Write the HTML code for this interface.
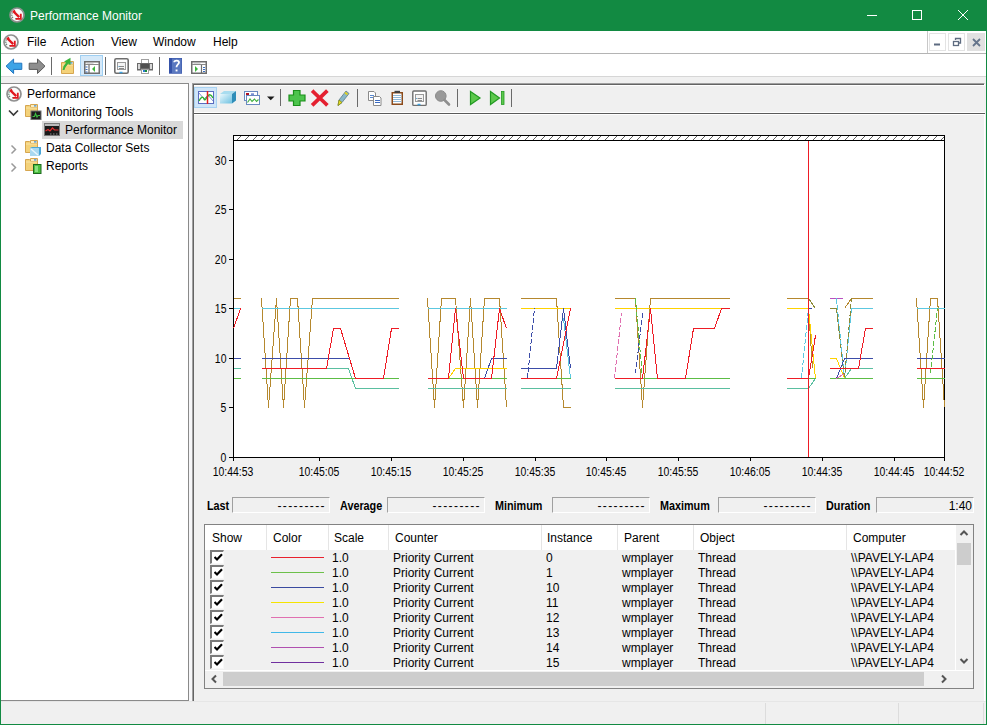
<!DOCTYPE html>
<html><head><meta charset="utf-8">
<style>
*{margin:0;padding:0;box-sizing:border-box}
html,body{width:987px;height:725px;overflow:hidden;background:#f0f0f0;font-family:"Liberation Sans",sans-serif;font-size:12px;color:#000}
.a{position:absolute}
.t{position:absolute;white-space:nowrap;line-height:14px}
.lab{transform:scaleX(0.87)}
#frame{left:0;top:0;width:987px;height:725px;border:1px solid #128a42;border-top:0}
#title{left:0;top:0;width:987px;height:31px;background:#128a42}
#menubar{left:1px;top:31px;width:985px;height:23px;background:#fff;border-bottom:1px solid #b4b4b4}
#toolbar{left:1px;top:54px;width:985px;height:23px;background:#fff;border-bottom:1px solid #d6d6d6}
#tree{left:1px;top:83px;width:188px;height:618px;background:#fff;border:1px solid #8a8a8a;border-left:0}
#rpane{left:192px;top:83px;width:793px;height:619px;border-top:1px solid #a0a0a0;border-left:1px solid #a0a0a0;border-bottom:1px solid #fff;border-right:1px solid #fff;box-shadow:inset 1px 1px 0 #646464}
#gap{left:189px;top:83px;width:3px;height:618px;background:#f6f6f8}
#rtool{left:194px;top:85px;width:791px;height:30px;background:#f0f0f0;border-top:1px solid #fff;border-bottom:1px solid #fff;box-shadow:inset 0 -1px 0 #5a5a5a, inset 0 -2px 0 #fff}
.sep{position:absolute;width:1px;background:#7a7a7a}
.sbox{position:absolute;top:497px;height:16px;border-top:1px solid #a0a0a0;border-left:1px solid #a0a0a0;border-bottom:1px solid #fff;border-right:1px solid #fff;background:#f0f0f0}
.slab{position:absolute;top:499px;font-weight:bold;font-size:12px;line-height:14px;white-space:nowrap;transform:scaleX(0.9);transform-origin:0 0}
.sval{position:absolute;top:499px;font-size:12px;line-height:14px;white-space:nowrap;text-align:right;letter-spacing:1.4px}
#table{left:204px;top:524px;width:770px;height:165px;border:1px solid #828282;background:#f0f0f0}
#thead{left:205px;top:525px;width:750px;height:25px;background:#fff}
.colsep{position:absolute;top:525px;width:1px;height:25px;background:#e5e5e5}
.cb{position:absolute;left:210px;width:14px;height:14px;border-top:2px solid #7a7a7a;border-left:2px solid #7a7a7a;border-bottom:1px solid #f8f8f8;border-right:1px solid #f8f8f8;background:#fff}
#status{left:1px;top:701px;width:985px;height:23px;background:#f0f0f0;border-top:1px solid #e6e6e6}
</style></head><body>
<div id="frame" class="a"></div>
<div id="title" class="a"></div>
<div class="t" style="left:30px;top:9px;color:#fff">Performance Monitor</div>
<div id="menubar" class="a"></div>
<div class="t" style="left:27px;top:35px">File</div>
<div class="t" style="left:61px;top:35px">Action</div>
<div class="t" style="left:111px;top:35px">View</div>
<div class="t" style="left:153px;top:35px">Window</div>
<div class="t" style="left:213px;top:35px">Help</div>
<div id="toolbar" class="a"></div>
<div id="tree" class="a"></div>
<div id="gap" class="a"></div>
<div id="rpane" class="a"></div>
<div id="rtool" class="a"></div>
<!--CHART-->
<svg class="a" style="left:0;top:0" width="987" height="725" shape-rendering="crispEdges">
<defs><pattern id="hat" x="5" y="136" width="8" height="4" patternUnits="userSpaceOnUse"><path d="M0 4 L4 0" stroke="#606060" stroke-width="1" fill="none"/></pattern></defs>
<rect x="234" y="141" width="710" height="316" fill="#fff"/>
<rect x="234" y="136" width="710" height="4" fill="#fff"/>
<rect x="234" y="136" width="710" height="4" fill="url(#hat)"/>
<g stroke="#000" stroke-width="1" fill="none">
<path d="M233.5 135 V461 M233 135.5 H945 M233 140.5 H945 M944.5 135 V461 M229 457.5 H945"/>
<path d="M229 160.5 H233"/>
<path d="M229 209.5 H233"/>
<path d="M229 259.5 H233"/>
<path d="M229 308.5 H233"/>
<path d="M229 358.5 H233"/>
<path d="M229 407.5 H233"/>
<path d="M229 457.5 H233"/>
<path d="M233.5 457 V461"/>
<path d="M319.5 457 V461"/>
<path d="M391.5 457 V461"/>
<path d="M463.5 457 V461"/>
<path d="M535.5 457 V461"/>
<path d="M606.5 457 V461"/>
<path d="M678.5 457 V461"/>
<path d="M750.5 457 V461"/>
<path d="M822.5 457 V461"/>
<path d="M894.5 457 V461"/>
<path d="M944.5 457 V461"/>
</g>
<g fill="none" stroke-width="1">
<path d="M233.5 298.5 L240.5 298.5" stroke="#b5882e"/>
<path d="M233.5 368.5 L240.5 368.5" stroke="#5abfa0"/>
<path d="M233.5 378.5 L240.5 378.5" stroke="#5cbd45"/>
<path d="M233.5 358.5 L240.5 358.5" stroke="#3b4ca8"/>
<path d="M233.5 308.5 L240.5 308.5" stroke="#5cc8e0"/>
<path d="M233.5 328.5 L240.5 308.5" stroke="#ee1c25"/>
<path d="M261.5 298.5 L268.5 407.5 L276.5 298.5 L283.5 407.5 L290.5 298.5 L297.5 298.5 L304.5 407.5 L312.5 298.5 L398.5 298.5" stroke="#b5882e"/>
<path d="M261.5 368.5 L348.5 368.5 L355.5 388.5 L398.5 388.5" stroke="#5abfa0"/>
<path d="M261.5 378.5 L398.5 378.5" stroke="#5cbd45"/>
<path d="M261.5 358.5 L348.5 358.5" stroke="#3b4ca8"/>
<path d="M261.5 308.5 L398.5 308.5" stroke="#5cc8e0"/>
<path d="M261.5 368.5 L326.5 368.5 L333.5 328.5 L340.5 328.5 L355.5 378.5 L383.5 378.5 L391.5 328.5 L398.5 328.5" stroke="#ee1c25"/>
<path d="M427.5 298.5 L434.5 407.5 L441.5 298.5 L455.5 298.5 L463.5 407.5 L470.5 298.5 L477.5 407.5 L484.5 298.5 L499.5 298.5 L506.5 407.5" stroke="#b5882e"/>
<path d="M427.5 378.5 L484.5 378.5 L491.5 358.5 L506.5 358.5" stroke="#3b4ca8"/>
<path d="M427.5 378.5 L448.5 378.5 L455.5 368.5 L506.5 368.5" stroke="#ffd200"/>
<path d="M427.5 388.5 L506.5 388.5" stroke="#5abfa0"/>
<path d="M427.5 378.5 L506.5 378.5" stroke="#5cbd45"/>
<path d="M427.5 308.5 L506.5 308.5" stroke="#5cc8e0"/>
<path d="M427.5 378.5 L448.5 378.5 L455.5 308.5 L463.5 378.5 L491.5 378.5 L499.5 308.5 L506.5 328.5" stroke="#ee1c25"/>
<path d="M520.5 298.5 L556.5 298.5 L563.5 407.5 L570.5 407.5" stroke="#b5882e"/>
<path d="M520.5 388.5 L570.5 388.5" stroke="#5abfa0"/>
<path d="M520.5 378.5 L570.5 378.5" stroke="#5cbd45"/>
<path d="M520.5 308.5 L570.5 308.5" stroke="#ffd200"/>
<path d="M563.5 318.5 L570.5 378.5" stroke="#5cc8e0"/>
<path d="M520.5 368.5 L556.5 368.5 L563.5 308.5 L570.5 368.5" stroke="#3b4ca8"/>
<path d="M520.5 378.5 L556.5 378.5 L570.5 308.5" stroke="#ee1c25"/>
<path d="M527.5 378.5 L534.5 308.5" stroke="#3b4ca8" stroke-dasharray="5 2"/>
<path d="M614.5 298.5 L635.5 298.5 L642.5 407.5 L650.5 298.5 L729.5 298.5" stroke="#b5882e"/>
<path d="M614.5 388.5 L729.5 388.5" stroke="#5abfa0"/>
<path d="M614.5 378.5 L729.5 378.5" stroke="#5cbd45"/>
<path d="M614.5 308.5 L729.5 308.5" stroke="#ffd200"/>
<path d="M614.5 378.5 L621.5 313.5" stroke="#e070b0" stroke-dasharray="5 2"/>
<path d="M635.5 373.5 L642.5 313.5" stroke="#3b4ca8" stroke-dasharray="5 2"/>
<path d="M635.5 298.5 L642.5 378.5" stroke="#5cbd45" stroke-dasharray="5 2"/>
<path d="M614.5 378.5 L642.5 378.5 L650.5 308.5 L657.5 378.5 L685.5 378.5 L693.5 328.5 L714.5 328.5 L721.5 308.5 L729.5 308.5" stroke="#ee1c25"/>
<path d="M786.5 298.5 L808.5 298.5" stroke="#b5882e"/>
<path d="M808.5 298.5 L815.5 308.5" stroke="#8c8a36"/>
<path d="M786.5 388.5 L808.5 388.5 L815.5 378.5" stroke="#5abfa0"/>
<path d="M808.5 378.5 L815.5 378.5" stroke="#5cbd45"/>
<path d="M801.5 378.5 L808.5 308.5 L815.5 378.5" stroke="#5cc8e0" stroke-dasharray="5 2"/>
<path d="M808.5 308.5 L811.5 308.5" stroke="#3b4ca8"/>
<path d="M808.5 308.5 L812.5 368.5" stroke="#b5882e"/>
<path d="M786.5 308.5 L808.5 308.5 L815.5 378.5" stroke="#ffd200"/>
<path d="M786.5 378.5 L808.5 378.5 L815.5 335.5" stroke="#ee1c25"/>
<path d="M829.5 298.5 L842.5 298.5" stroke="#b850c0"/>
<path d="M829.5 308.5 L836.5 308.5 L844.5 378.5" stroke="#8c8a36"/>
<path d="M844.5 308.5 L851.5 298.5 L872.5 298.5" stroke="#b5882e"/>
<path d="M844.5 378.5 L851.5 308.5" stroke="#b5882e"/>
<path d="M844.5 378.5 L851.5 308.5 L872.5 308.5" stroke="#5cc8e0"/>
<path d="M836.5 298.5 L844.5 378.5" stroke="#5cc8e0" stroke-dasharray="5 2"/>
<path d="M844.5 378.5 L851.5 298.5" stroke="#8c8a36" stroke-dasharray="5 2"/>
<path d="M829.5 358.5 L836.5 358.5 L844.5 378.5" stroke="#ffd200"/>
<path d="M844.5 378.5 L851.5 368.5 L872.5 368.5" stroke="#5abfa0"/>
<path d="M829.5 378.5 L872.5 378.5" stroke="#5cbd45"/>
<path d="M836.5 378.5 L844.5 358.5 L872.5 358.5" stroke="#3b4ca8"/>
<path d="M836.5 378.5 L844.5 373.5" stroke="#e070b0"/>
<path d="M829.5 368.5 L858.5 368.5 L865.5 328.5 L872.5 328.5" stroke="#ee1c25"/>
<path d="M916.5 298.5 L923.5 407.5 L930.5 298.5 L937.5 298.5 L944.5 407.5" stroke="#b5882e"/>
<path d="M916.5 378.5 L944.5 378.5" stroke="#5cbd45"/>
<path d="M916.5 358.5 L944.5 358.5" stroke="#3b4ca8"/>
<path d="M916.5 308.5 L944.5 308.5" stroke="#5cc8e0"/>
<path d="M916.5 368.5 L944.5 368.5" stroke="#ee1c25"/>
<path d="M930.5 373.5 L937.5 308.5" stroke="#5cbd45" stroke-dasharray="5 2"/>
</g>
<path d="M808.5 141 V457" stroke="#ee1c25" stroke-width="1"/>
</svg>
<div class="t lab" style="right:760px;top:154px">30</div>
<div class="t lab" style="right:760px;top:203px">25</div>
<div class="t lab" style="right:760px;top:253px">20</div>
<div class="t lab" style="right:760px;top:302px">15</div>
<div class="t lab" style="right:760px;top:352px">10</div>
<div class="t lab" style="right:760px;top:401px">5</div>
<div class="t lab" style="right:760px;top:451px">0</div>
<div class="t lab" style="left:203px;width:60px;text-align:center;top:465px">10:44:53</div>
<div class="t lab" style="left:289px;width:60px;text-align:center;top:465px">10:45:05</div>
<div class="t lab" style="left:361px;width:60px;text-align:center;top:465px">10:45:15</div>
<div class="t lab" style="left:433px;width:60px;text-align:center;top:465px">10:45:25</div>
<div class="t lab" style="left:505px;width:60px;text-align:center;top:465px">10:45:35</div>
<div class="t lab" style="left:576px;width:60px;text-align:center;top:465px">10:45:45</div>
<div class="t lab" style="left:648px;width:60px;text-align:center;top:465px">10:45:55</div>
<div class="t lab" style="left:720px;width:60px;text-align:center;top:465px">10:46:05</div>
<div class="t lab" style="left:792px;width:60px;text-align:center;top:465px">10:44:35</div>
<div class="t lab" style="left:864px;width:60px;text-align:center;top:465px">10:44:45</div>
<div class="t lab" style="left:914px;width:60px;text-align:center;top:465px">10:44:52</div>
<!--/CHART-->

<div class="a" style="left:42px;top:121px;width:141px;height:18px;background:#d9d9d9"></div>
<div class="t" style="left:27px;top:87px">Performance</div>
<div class="t" style="left:46px;top:105px">Monitoring Tools</div>
<div class="t" style="left:65px;top:123px">Performance Monitor</div>
<div class="t" style="left:46px;top:141px">Data Collector Sets</div>
<div class="t" style="left:46px;top:159px">Reports</div>

<div class="slab" style="left:207px">Last</div>
<div class="sbox" style="left:232px;width:98px"></div>
<div class="sval" style="left:232px;width:94px">---------</div>
<div class="slab" style="left:340px">Average</div>
<div class="sbox" style="left:387px;width:98px"></div>
<div class="sval" style="left:387px;width:94px">---------</div>
<div class="slab" style="left:495px">Minimum</div>
<div class="sbox" style="left:552px;width:98px"></div>
<div class="sval" style="left:552px;width:94px">---------</div>
<div class="slab" style="left:660px">Maximum</div>
<div class="sbox" style="left:718px;width:98px"></div>
<div class="sval" style="left:718px;width:94px">---------</div>
<div class="slab" style="left:826px">Duration</div>
<div class="sbox" style="left:876px;width:98px"></div>
<div class="sval" style="left:876px;width:96px;letter-spacing:0">1:40</div>
<div id="table" class="a"></div>
<div id="thead" class="a"></div>
<div class="colsep" style="left:266px"></div>
<div class="colsep" style="left:328px"></div>
<div class="colsep" style="left:388px"></div>
<div class="colsep" style="left:541px"></div>
<div class="colsep" style="left:617px"></div>
<div class="colsep" style="left:693px"></div>
<div class="colsep" style="left:846px"></div>
<div class="t" style="left:212px;top:531px">Show</div>
<div class="t" style="left:273px;top:531px">Color</div>
<div class="t" style="left:334px;top:531px">Scale</div>
<div class="t" style="left:395px;top:531px">Counter</div>
<div class="t" style="left:547px;top:531px">Instance</div>
<div class="t" style="left:624px;top:531px">Parent</div>
<div class="t" style="left:700px;top:531px">Object</div>
<div class="t" style="left:853px;top:531px">Computer</div>
<div class="cb" style="top:550px"><svg class="a" style="left:2px;top:1px" width="9" height="9" viewBox="0 0 9 9"><path d="M0.5 4 L3 6.5 L8 1.2" stroke="#000" stroke-width="2.2" fill="none"/></svg></div>
<div class="a" style="left:271px;top:557px;width:53px;height:1px;background:#e8202e"></div>
<div class="t" style="left:332px;top:551px">1.0</div>
<div class="t" style="left:393px;top:551px">Priority Current</div>
<div class="t" style="left:546px;top:551px">0</div>
<div class="t" style="left:622px;top:551px">wmplayer</div>
<div class="t" style="left:698px;top:551px">Thread</div>
<div class="t" style="left:851px;top:551px">\\PAVELY-LAP4</div>
<div class="cb" style="top:565px"><svg class="a" style="left:2px;top:1px" width="9" height="9" viewBox="0 0 9 9"><path d="M0.5 4 L3 6.5 L8 1.2" stroke="#000" stroke-width="2.2" fill="none"/></svg></div>
<div class="a" style="left:271px;top:572px;width:53px;height:1px;background:#6cc04a"></div>
<div class="t" style="left:332px;top:566px">1.0</div>
<div class="t" style="left:393px;top:566px">Priority Current</div>
<div class="t" style="left:546px;top:566px">1</div>
<div class="t" style="left:622px;top:566px">wmplayer</div>
<div class="t" style="left:698px;top:566px">Thread</div>
<div class="t" style="left:851px;top:566px">\\PAVELY-LAP4</div>
<div class="cb" style="top:580px"><svg class="a" style="left:2px;top:1px" width="9" height="9" viewBox="0 0 9 9"><path d="M0.5 4 L3 6.5 L8 1.2" stroke="#000" stroke-width="2.2" fill="none"/></svg></div>
<div class="a" style="left:271px;top:587px;width:53px;height:1px;background:#3a4aa0"></div>
<div class="t" style="left:332px;top:581px">1.0</div>
<div class="t" style="left:393px;top:581px">Priority Current</div>
<div class="t" style="left:546px;top:581px">10</div>
<div class="t" style="left:622px;top:581px">wmplayer</div>
<div class="t" style="left:698px;top:581px">Thread</div>
<div class="t" style="left:851px;top:581px">\\PAVELY-LAP4</div>
<div class="cb" style="top:595px"><svg class="a" style="left:2px;top:1px" width="9" height="9" viewBox="0 0 9 9"><path d="M0.5 4 L3 6.5 L8 1.2" stroke="#000" stroke-width="2.2" fill="none"/></svg></div>
<div class="a" style="left:271px;top:602px;width:53px;height:1px;background:#f5e400"></div>
<div class="t" style="left:332px;top:596px">1.0</div>
<div class="t" style="left:393px;top:596px">Priority Current</div>
<div class="t" style="left:546px;top:596px">11</div>
<div class="t" style="left:622px;top:596px">wmplayer</div>
<div class="t" style="left:698px;top:596px">Thread</div>
<div class="t" style="left:851px;top:596px">\\PAVELY-LAP4</div>
<div class="cb" style="top:610px"><svg class="a" style="left:2px;top:1px" width="9" height="9" viewBox="0 0 9 9"><path d="M0.5 4 L3 6.5 L8 1.2" stroke="#000" stroke-width="2.2" fill="none"/></svg></div>
<div class="a" style="left:271px;top:617px;width:53px;height:1px;background:#e070b0"></div>
<div class="t" style="left:332px;top:611px">1.0</div>
<div class="t" style="left:393px;top:611px">Priority Current</div>
<div class="t" style="left:546px;top:611px">12</div>
<div class="t" style="left:622px;top:611px">wmplayer</div>
<div class="t" style="left:698px;top:611px">Thread</div>
<div class="t" style="left:851px;top:611px">\\PAVELY-LAP4</div>
<div class="cb" style="top:625px"><svg class="a" style="left:2px;top:1px" width="9" height="9" viewBox="0 0 9 9"><path d="M0.5 4 L3 6.5 L8 1.2" stroke="#000" stroke-width="2.2" fill="none"/></svg></div>
<div class="a" style="left:271px;top:632px;width:53px;height:1px;background:#40b8e8"></div>
<div class="t" style="left:332px;top:626px">1.0</div>
<div class="t" style="left:393px;top:626px">Priority Current</div>
<div class="t" style="left:546px;top:626px">13</div>
<div class="t" style="left:622px;top:626px">wmplayer</div>
<div class="t" style="left:698px;top:626px">Thread</div>
<div class="t" style="left:851px;top:626px">\\PAVELY-LAP4</div>
<div class="cb" style="top:640px"><svg class="a" style="left:2px;top:1px" width="9" height="9" viewBox="0 0 9 9"><path d="M0.5 4 L3 6.5 L8 1.2" stroke="#000" stroke-width="2.2" fill="none"/></svg></div>
<div class="a" style="left:271px;top:647px;width:53px;height:1px;background:#b050b0"></div>
<div class="t" style="left:332px;top:641px">1.0</div>
<div class="t" style="left:393px;top:641px">Priority Current</div>
<div class="t" style="left:546px;top:641px">14</div>
<div class="t" style="left:622px;top:641px">wmplayer</div>
<div class="t" style="left:698px;top:641px">Thread</div>
<div class="t" style="left:851px;top:641px">\\PAVELY-LAP4</div>
<div class="cb" style="top:655px"><svg class="a" style="left:2px;top:1px" width="9" height="9" viewBox="0 0 9 9"><path d="M0.5 4 L3 6.5 L8 1.2" stroke="#000" stroke-width="2.2" fill="none"/></svg></div>
<div class="a" style="left:271px;top:662px;width:53px;height:1px;background:#7030a0"></div>
<div class="t" style="left:332px;top:656px">1.0</div>
<div class="t" style="left:393px;top:656px">Priority Current</div>
<div class="t" style="left:546px;top:656px">15</div>
<div class="t" style="left:622px;top:656px">wmplayer</div>
<div class="t" style="left:698px;top:656px">Thread</div>
<div class="t" style="left:851px;top:656px">\\PAVELY-LAP4</div>
<div class="a" style="left:955px;top:525px;width:18px;height:145px;background:#f0f0f0;border-left:1px solid #fff"></div>
<div class="a" style="left:957px;top:543px;width:14px;height:22px;background:#cdcdcd"></div>
<div class="a" style="left:205px;top:670px;width:768px;height:18px;background:#f0f0f0;border-top:1px solid #fff"></div>
<div class="a" style="left:223px;top:672px;width:701px;height:14px;background:#cdcdcd"></div>
<div id="status" class="a"></div>
<div class="a" style="left:765px;top:703px;width:1px;height:21px;background:#dcdcdc"></div>
<div class="a" style="left:898px;top:703px;width:1px;height:21px;background:#dcdcdc"></div>
<div class="a" style="left:983px;top:703px;width:1px;height:21px;background:#dcdcdc"></div>

<!--ICONS-->
<svg class="a" style="left:0;top:0" width="987" height="725">
<defs>
<g id="gauge">
 <circle cx="8" cy="8" r="7" fill="#fafafa" stroke="#909090" stroke-width="1.7"/>
 <path d="M3.4 5.5 A5 5 0 0 0 4.6 11.6" stroke="#5a7a6a" stroke-width="1.2" fill="none" stroke-dasharray="1.2 1"/>
 <path d="M6 11.8 h1.5" stroke="#5a7a6a" stroke-width="1"/>
 <path d="M4 4 L10.2 10.2" stroke="#e0161e" stroke-width="2.4"/>
 <path d="M11.8 6.8 V11.8 H6.8" stroke="#e0161e" stroke-width="1.8" fill="none"/>
 <path d="M5 3.2 L6.2 4.8" stroke="#e0161e" stroke-width="1.2"/>
</g>
<g id="folder">
 <path d="M0.5 1.5 H4.5 L5.5 2.5 H12.5 V12.5 H0.5 Z" fill="#f4d27a" stroke="#d6a650" stroke-width="1"/>
 <path d="M5.5 0.5 H12.5 V3.5 H5.5 Z" fill="#fbeec0" stroke="#d6a650" stroke-width="1"/>
 <rect x="9" y="1.3" width="2.5" height="1.2" fill="#3a8ad8"/>
 <path d="M1 4 H12" stroke="#f8e4a8" stroke-width="1"/>
</g>
<g id="winicon">
 <rect x="0.75" y="0.75" width="14.5" height="11.5" fill="#fff" stroke="#6e6e6e" stroke-width="1.5"/>
 <path d="M1 3.5 H15" stroke="#8a8a8a" stroke-width="1"/>
 <path d="M2.5 2 H9.5" stroke="#b0b0b0" stroke-width="1"/>
</g>
</defs>
<!-- title icon -->
<use href="#gauge" x="9" y="7"/>
<!-- menu icon -->
<use href="#gauge" x="3" y="34"/>
<!-- window controls -->
<path d="M867 15.5 H877" stroke="#fff" stroke-width="1"/>
<rect x="912.5" y="10.5" width="9" height="9" fill="none" stroke="#fff" stroke-width="1"/>
<path d="M958 10 L968 20 M968 10 L958 20" stroke="#fff" stroke-width="1"/>
<!-- mdi buttons -->
<path d="M927.5 31 V53" stroke="#c8c8c8"/>
<rect x="929.5" y="33.5" width="16" height="17" fill="#fff" stroke="#e3e3e3"/>
<rect x="948.5" y="33.5" width="16" height="17" fill="#fff" stroke="#e3e3e3"/>
<rect x="967" y="33" width="18" height="18" fill="#e1e1e1"/>
<path d="M934 44.5 H940" stroke="#5d6b80" stroke-width="2"/>
<rect x="953.5" y="41.5" width="5" height="4" fill="none" stroke="#5d6b80" stroke-width="1.3"/>
<path d="M955.5 40 V38.5 H960.5 V43 H959" fill="none" stroke="#5d6b80" stroke-width="1.3"/>
<path d="M973 39 L980 46 M980 39 L973 46" stroke="#66758c" stroke-width="1.8"/>
<!-- main toolbar -->
<path d="M6 66.2 L13.6 59 V63.2 H21.8 V69.4 H13.6 V73.5 Z" fill="#3ea4e6" stroke="#2176c0" stroke-width="1"/>
<path d="M45 66.2 L37.5 59 V63.2 H29.2 V69.4 H37.5 V73.5 Z" fill="#8e8e8e" stroke="#5a5a5a" stroke-width="1"/>
<path d="M51.5 57 V75" stroke="#6a6a6a"/>
<use href="#folder" x="61" y="61"/>
<path d="M63.5 70 C64 66 66 64 67.5 62.5 L66 61.5 L69.5 59.5 L69.5 63.5 L68.5 63" stroke="#3cb43c" stroke-width="2" fill="#3cb43c"/>
<rect x="80.5" y="55.5" width="22" height="20" fill="#d5e9f9" stroke="#9fcff2"/>
<use href="#winicon" x="84" y="61"/>
<path d="M85 6l" />
<path d="M85.5 67 h2 M85.5 69.5 h2 M85.5 72 h2" stroke="#3a6fc0" stroke-width="1.2"/>
<path d="M89 65 V73" stroke="#6e6e6e" stroke-width="1.2"/>
<path d="M95 66 L92 69 L95 72 Z" fill="#3cb43c"/>
<path d="M105.5 57 V75" stroke="#6a6a6a"/>
<!-- properties -->
<rect x="114.8" y="58.8" width="13.4" height="14.4" rx="1.5" fill="#fff" stroke="#6e6e6e" stroke-width="1.6"/>
<rect x="117.5" y="62.5" width="8" height="7" fill="#f4f4f4" stroke="#9a9a9a" stroke-width="1"/>
<path d="M119 66.5 H124 M119 68.5 H124" stroke="#8a8a8a"/>
<path d="M118.5 66.5 h0.8" stroke="#3aa0e0"/>
<path d="M119.5 72.5 H122.5" stroke="#3aa0e0" stroke-width="1.5"/>
<!-- printer -->
<rect x="141.5" y="59.5" width="7" height="4" fill="#fff" stroke="#a0a0a0"/>
<rect x="137" y="63" width="16" height="7.5" fill="#6a6a6a"/>
<rect x="138" y="64" width="2" height="5" fill="#d8d8d8"/>
<rect x="150" y="64" width="2" height="5" fill="#d8d8d8"/>
<rect x="141" y="64" width="8" height="4" fill="#505050"/>
<rect x="141.5" y="69.5" width="7" height="4" fill="#fff" stroke="#a0a0a0"/>
<rect x="143" y="70" width="2" height="2" fill="#2a7ad0"/><rect x="145" y="70" width="2" height="2" fill="#1a8a3a"/>
<path d="M159.5 57 V75" stroke="#6a6a6a"/>
<!-- help -->
<rect x="169" y="58" width="13" height="15.7" fill="#3552a8"/>
<rect x="172" y="58.5" width="9.5" height="14.7" fill="#5a78c0"/>
<path d="M174.2 62.2 C174.2 60 179 60 179 62.5 C179 64.5 176.5 64.5 176.5 67.2" stroke="#fff" stroke-width="1.8" fill="none"/>
<rect x="175.6" y="69.5" width="1.9" height="1.9" fill="#fff"/>
<!-- action pane -->
<use href="#winicon" x="191" y="61"/>
<path d="M201.5 65 V73" stroke="#6e6e6e" stroke-width="1.2"/>
<path d="M203 67.5 h2 M203 69.5 h2 M203 71.5 h2" stroke="#3a6fc0" stroke-width="1"/>
<path d="M195 66 L198 69 L195 72 Z" fill="#3cb43c"/>
<!-- tree icons -->
<use href="#gauge" x="6" y="86"/>
<path d="M9 110.5 L13.5 115 L18 110.5" stroke="#3a3a3a" stroke-width="1.7" fill="none"/>
<use href="#folder" x="25" y="104"/>
<rect x="31" y="111" width="10" height="8.5" fill="#1e1e1e" stroke="#707070" stroke-width="1"/>
<path d="M32.5 116.5 L34.5 116.5 L35.5 113.5 L37 117 L38 115.5 L40 115.5" stroke="#3cc040" stroke-width="1.1" fill="none"/>
<rect x="44.5" y="123.5" width="15" height="12" fill="#1a1a1a" stroke="#7a7a7a"/>
<rect x="45" y="124" width="14" height="2" fill="#bcbcbc"/>
<path d="M45.5 131 L48 129.5 L50 131 L52.5 128 L54.5 130 H58.5" stroke="#e23030" stroke-width="1.2" fill="none"/>
<path d="M50 134 h1.5 M53 134 h1.5 M56 134 h1.5" stroke="#8a8a8a"/>
<path d="M11.5 145.5 L15.5 149.5 L11.5 153.5" stroke="#9a9a9a" stroke-width="1.5" fill="none"/>
<use href="#folder" x="25" y="140"/>
<path d="M30 148 L32 147 H41 V154 L39 156 H30 Z" fill="#4aa6d8"/>
<path d="M30 148 H39 V156 H30Z" fill="#a8d8f0"/>
<path d="M31 149 L38 155" stroke="#e8f6fc" stroke-width="1.5"/>
<path d="M11.5 163.5 L15.5 167.5 L11.5 171.5" stroke="#9a9a9a" stroke-width="1.5" fill="none"/>
<use href="#folder" x="25" y="158"/>
<rect x="33.5" y="164.5" width="7.5" height="9" fill="#4cc040" stroke="#1e6a1e"/>
<rect x="35" y="166" width="3" height="6" fill="#8ce080"/>
<!-- right toolbar -->
<rect x="194.5" y="87.5" width="22" height="20" fill="#cfe5f8" stroke="#a8d2f2"/>
<rect x="198.5" y="91.5" width="15" height="12" fill="#fff" stroke="#5a6cc0"/>
<path d="M199 93 L204 99 L208 95 L213 101" stroke="#8090d0" stroke-width="1" fill="none"/>
<path d="M199 101 C201 97 203 96 204 99 C205 102 207 96 209 95 C211 94 212 96 213 98" stroke="#30b030" stroke-width="1.4" fill="none"/>
<path d="M207.5 91 V104" stroke="#e02020" stroke-width="1.5"/>
<path d="M220 94 L224 91 H236 L232 94 Z" fill="#a8dcef"/>
<linearGradient id="cg" x1="0" y1="0" x2="1" y2="1"><stop offset="0" stop-color="#eaf8fd"/><stop offset="1" stop-color="#6cc0e0"/></linearGradient><path d="M220 94 H232 V103.5 H220 Z" fill="url(#cg)"/>
<path d="M232 94 L236 91 V100.5 L232 103.5 Z" fill="#2f8db8"/>
<rect x="244.5" y="91.5" width="13" height="9" fill="#fff" stroke="#6a8ac0"/>
<rect x="246" y="93" width="3" height="2" fill="#b01020"/><rect x="251" y="93.5" width="3" height="1.2" fill="#4060c0"/>
<rect x="246.5" y="95.5" width="13" height="9" fill="#fff" stroke="#6a8ac0"/>
<path d="M247.5 102.5 L250 99 L252 101.5 L254.5 99 L256.5 101.5 L258.5 99.5" stroke="#40b040" stroke-width="1.1" fill="none"/>
<path d="M267 96.5 H274.5 L270.75 100.3 Z" fill="#1a1a1a"/>
<path d="M280.5 89 V106" stroke="#6a6a6a"/>
<path d="M293.5 90.5 H300 V95 H305 V101 H300 V105.5 H293.5 V101 H289 V95 H293.5 Z" fill="#4cc44c" stroke="#1a8f1a" stroke-width="1.2"/>
<path d="M313.5 92 L326 104 M326 92 L313.5 104" stroke="#e42030" stroke-width="3.8" stroke-linecap="square"/>
<path d="M338 105.5 L339 100 L346 91 L349 93.5 L342 102.5 Z" fill="#8ab8c8" stroke="#5a7a8a" stroke-width="0.8"/>
<path d="M338 105.5 L339 100 L342 102.5 Z" fill="#e8e020" stroke="#8a8a10" stroke-width="0.8"/>
<path d="M345 92.5 L347.5 94.5" stroke="#e0d020" stroke-width="2"/>
<path d="M357.5 89 V107" stroke="#6a6a6a"/>
<!-- copy -->
<path d="M368.5 91.5 H374 L375.5 93 V100.5 H368.5 Z" fill="#fff" stroke="#8a8a8a"/>
<path d="M370 95.5 h4 M370 97.5 h4" stroke="#5a8ad0"/>
<path d="M373.5 96.5 H379.5 L381 98 V105.5 H373.5 Z" fill="#fff" stroke="#8a8a8a"/>
<path d="M375 100.5 h5 M375 102.5 h5" stroke="#3a6ac0"/>
<!-- paste -->
<rect x="391.5" y="92" width="11.5" height="13" fill="#8b4a1a"/>
<rect x="393" y="93.5" width="8.5" height="10" fill="#fff"/>
<path d="M393 95.5 h8.5 M393 97.5 h8.5 M393 99.5 h8.5 M393 101.5 h8.5" stroke="#90b8d8"/>
<rect x="394.5" y="90.8" width="5.5" height="2.2" fill="#404040"/>
<!-- properties -->
<rect x="412.8" y="91" width="13.4" height="14.4" rx="1" fill="#fff" stroke="#6e6e6e" stroke-width="1.4"/>
<rect x="415.5" y="94.5" width="8" height="7" fill="#f4f4f4" stroke="#9a9a9a" stroke-width="1"/>
<path d="M417.5 98.5 H422 M417.5 100.5 H422" stroke="#8a8a8a"/>
<path d="M416 98.5 h0.8" stroke="#3aa0e0"/>
<path d="M417.5 104.5 H420.5" stroke="#3aa0e0" stroke-width="1.5"/>
<!-- zoom -->
<circle cx="440.8" cy="96" r="5.3" fill="#999" stroke="#8a8a8a"/>
<path d="M444.5 100 L449 104.5" stroke="#8e8e8e" stroke-width="2.6" stroke-linecap="round"/>
<path d="M457.5 89 V107" stroke="#6a6a6a"/>
<path d="M470.5 91.5 L480 98 L470.5 104.5 Z" fill="#5cc84c" stroke="#229a22" stroke-width="1.2"/>
<path d="M490.5 91.5 L499.5 98 L490.5 104.5 Z" fill="#5cc84c" stroke="#229a22" stroke-width="1.2"/>
<rect x="501.5" y="91.5" width="2.5" height="13" fill="#5cc84c" stroke="#229a22" stroke-width="0.8"/>
<path d="M511.5 89 V107" stroke="#6a6a6a"/>
<!-- table scroll arrows -->
<path d="M216 675.5 L212.5 679 L216 682.5" stroke="#555" stroke-width="2" fill="none"/>
<path d="M942 675.5 L945.5 679 L942 682.5" stroke="#555" stroke-width="2" fill="none"/>
<path d="M960.5 535 L964 531.5 L967.5 535" stroke="#555" stroke-width="2" fill="none"/>
<path d="M960.5 659 L964 662.5 L967.5 659" stroke="#555" stroke-width="2" fill="none"/>
</svg>
<!--/ICONS-->
</body></html>
